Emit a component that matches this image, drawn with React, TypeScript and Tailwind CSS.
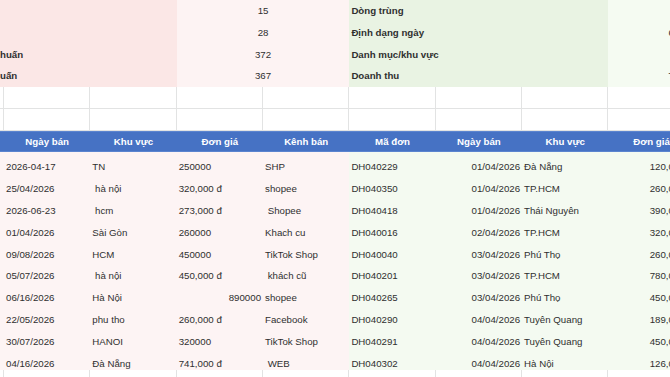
const GRID = 'grid grid-cols-[4px_repeat(8,86.35px)]'

type Top = { left: string; value: string; label: string; right: string }

const topRows: Top[] = [
  { left: '', value: '15', label: 'Dòng trùng', right: '' },
  { left: '', value: '28', label: 'Định dạng ngày', right: '6' },
  { left: 'huấn', value: '372', label: 'Danh mục/khu vực', right: '' },
  { left: 'uấn', value: '367', label: 'Doanh thu', right: 'T' },
]

const headers = ['Ngày bán', 'Khu vực', 'Đơn giá', 'Kênh bán', 'Mã đơn', 'Ngày bán', 'Khu vực', 'Đơn giá']

// [ngày, khu vực, đơn giá, kênh, mã, ngày chuẩn, khu vực chuẩn, đơn giá chuẩn]
const rows: string[][] = [
  ['2026-04-17', 'TN', '250000', 'SHP', 'DH040229', '01/04/2026', 'Đà Nẵng', '120,000 đ'],
  ['25/04/2026', ' hà nội', '320,000 đ', 'shopee', 'DH040350', '01/04/2026', 'TP.HCM', '260,000 đ'],
  ['2026-06-23', ' hcm', '273,000 đ', ' Shopee', 'DH040418', '01/04/2026', 'Thái Nguyên', '390,000 đ'],
  ['01/04/2026', 'Sài Gòn', '260000', 'Khach cu', 'DH040016', '02/04/2026', 'TP.HCM', '320,000 đ'],
  ['09/08/2026', 'HCM', '450000', 'TikTok Shop', 'DH040040', '03/04/2026', 'Phú Thọ', '260,000 đ'],
  ['05/07/2026', ' hà nội', '450,000 đ', ' khách cũ', 'DH040201', '03/04/2026', 'TP.HCM', '780,000 đ'],
  ['06/16/2026', 'Hà Nội', '#890000', 'shopee', 'DH040265', '03/04/2026', 'Phú Thọ', '450,000 đ'],
  ['22/05/2026', 'phu tho', '260,000 đ', 'Facebook', 'DH040290', '04/04/2026', 'Tuyên Quang', '189,000 đ'],
  ['30/07/2026', 'HANOI', '320000', 'TikTok Shop', 'DH040291', '04/04/2026', 'Tuyên Quang', '450,000 đ'],
  ['04/16/2026', 'Đà Nẵng', '741,000 đ', ' WEB', 'DH040302', '04/04/2026', 'Hà Nội', '126,000 đ'],
]

function EmptyRow() {
  return (
    <div className={`${GRID} h-[21.75px]`}>
      {Array.from({ length: 9 }).map((_, i) => (
        <div key={i} className="border-r border-b border-[#e2e3e3] bg-white" />
      ))}
    </div>
  )
}

export default function App() {
  return (
    <div className="w-[670px] h-[377px] overflow-hidden bg-white text-[9.7px] leading-none text-[#2f2f2f] font-['Liberation_Sans',Arial,sans-serif]">
      {topRows.map((r, i) => (
        <div key={i} className={`${GRID} h-[21.75px]`}>
          <div className="col-span-3 bg-[#fbe7e6] flex items-center font-bold whitespace-nowrap overflow-hidden">{r.left}</div>
          <div className="col-span-2 bg-[#fdf3f3] flex items-center justify-center">{r.value}</div>
          <div className="col-span-3 bg-[#e9f3e3] flex items-center pl-[2px] font-bold">{r.label}</div>
          <div className="bg-[#f5fbf2] flex items-center pl-[60px] whitespace-nowrap">{r.right}</div>
        </div>
      ))}

      <EmptyRow />
      <EmptyRow />

      <div className={`${GRID} h-[21.75px] bg-[#4672c4] border-y border-[#5b84cf]`}>
        <div />
        {headers.map((h, i) => (
          <div key={i} className="flex items-center justify-center font-bold text-white">{h}</div>
        ))}
      </div>

      {rows.map((r, i) => (
        <div key={i} className={`${GRID} h-[21.8px]`}>
          <div className="bg-[#fdf4f4]" />
          {r.map((c, j) => {
            const right = c.startsWith('#') || j === 5 || j === 7
            const text = c.replace('#', '')
            return (
              <div
                key={j}
                className={`flex items-end pb-[2px] whitespace-pre overflow-visible ${j < 4 ? 'bg-[#fdf4f4]' : 'bg-[#f4faf1]'} ${right ? 'justify-end pr-[2px]' : 'pl-[2px]'}`}
              >
                {text}
              </div>
            )
          })}
        </div>
      ))}

      <EmptyRow />
    </div>
  )
}
